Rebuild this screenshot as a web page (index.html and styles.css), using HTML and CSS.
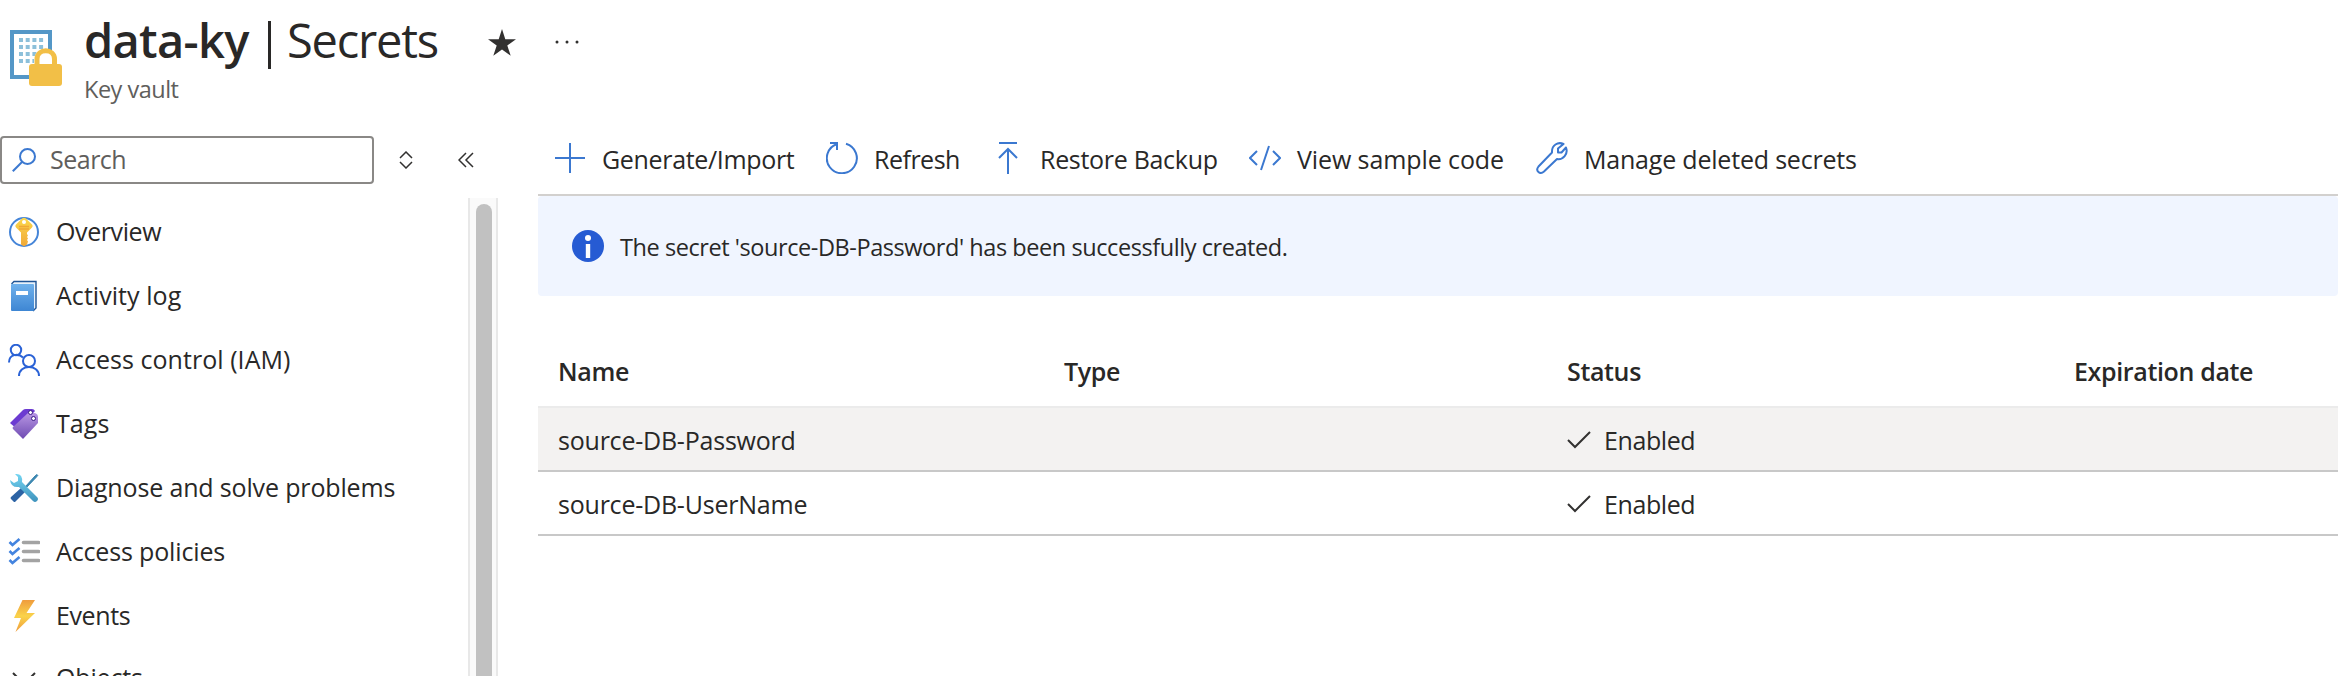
FILE: index.html
```html
<!DOCTYPE html>
<html lang="en">
<head>
<meta charset="utf-8">
<title>data-ky | Secrets</title>
<link rel="stylesheet" href="styles.css">
</head>
<body>
<header class="header">
  <svg class="vault" viewBox="0 0 52 56" width="52" height="56">
    <rect x="2" y="2" width="38" height="45" fill="#fff" stroke="#5497c7" stroke-width="4"/>
    <g stroke="#8dc0da" stroke-width="4" stroke-dasharray="4 2.7">
      <path d="M9 10h25M9 17h25M9 24h25M9 31h25"/>
    </g>
    <path d="M24 40V30C24 16 47 16 47 30V40Z" fill="#fff"/>
    <path d="M27 38V29C27 18 44.500 18 44.500 29V38" fill="none" stroke="#f2bf47" stroke-width="5"/>
    <rect x="19" y="34" width="33" height="22" rx="3" fill="#f2bf47"/>
  </svg>
  <div class="titles">
    <div class="title-row">
      <h1 class="title"><span class="name">data-ky</span><span class="bar"></span><span class="section">Secrets</span></h1>
      <svg class="star" viewBox="0 0 28 27" width="28" height="27"><path d="M14 0l3.300 10.200H28l-8.700 6.300 3.400 10.300L14 20.500l-8.700 6.300 3.400-10.300L0 10.200h10.700z" fill="#323130"/></svg>
      <svg class="more" viewBox="0 0 24 4" width="24" height="4" fill="#323130"><circle cx="2" cy="2" r="1.500"/><circle cx="12" cy="2" r="1.500"/><circle cx="22" cy="2" r="1.500"/></svg>
    </div>
    <div class="subtitle">Key vault</div>
  </div>
</header>
<div class="body">
  <nav class="side">
    <div class="search-row">
      <div class="search">
        <svg viewBox="0 0 24 24" width="24" height="24" fill="none" stroke="#3b78d0" stroke-width="2"><circle cx="15.500" cy="8.500" r="7.500"/><path d="M10 14L.8 23.200"/></svg>
        <span>Search</span>
      </div>
      <svg class="sort" viewBox="0 0 14 18" width="14" height="18" fill="none" stroke="#323130" stroke-width="1.500"><path d="M1 7l6-6 6 6M1 11l6 6 6-6"/></svg>
      <svg class="collapse" viewBox="0 0 16 16" width="16" height="16" fill="none" stroke="#323130" stroke-width="1.500"><path d="M8 1L1 8l7 7M15 1L8 8l7 7"/></svg>
    </div>
    <div class="menu-wrap">
      <ul class="menu">
        <li class="tight"><svg viewBox="0 0 32 32" width="32" height="32"><defs><linearGradient id="key" x2="0" y2="1"><stop stop-color="#fbd84b"/><stop offset="1" stop-color="#f0a838"/></linearGradient></defs><circle cx="16" cy="16" r="14" fill="#fff" stroke="#4585d8" stroke-width="2"/><path d="M14 2.500q2-1.500 4 0l6 6q1.500 1.500 0 3l-5 5V18l1 1.500-1 1.500 1 1.500-1 1.500 1 1.500-1 3-3 2-3-2V16.500l-5-5q-1.500-1.500 0-3z" fill="url(#key)"/><circle cx="16" cy="6" r="2" fill="#fff"/><path d="M11 10.500h10M11 13h10" stroke="#f0a838" stroke-width="1.300"/></svg><span>Overview</span></li>
        <li class="wide"><svg viewBox="0 0 32 32" width="32" height="32"><defs><linearGradient id="book" x2="0" y2="1"><stop stop-color="#6fb1ec"/><stop offset="1" stop-color="#3e86d3"/></linearGradient></defs><path d="M3.500 4L6 1.500h22V28l-3 3" fill="#e8f2fb" stroke="#1f5596" stroke-width="1.400"/><rect x="3" y="4" width="23" height="27" rx="1" fill="url(#book)"/><path d="M8 11h12v4H8z" fill="#fff"/></svg><span>Activity log</span></li>
        <li class="wide"><svg viewBox="0 0 32 32" width="32" height="32" fill="none" stroke="#2a62d6" stroke-width="2"><circle cx="8" cy="6" r="5.200"/><path d="M1 18.500C1 9.500 11 9.500 15 13.500"/><circle cx="21" cy="17" r="6"/><path d="M11 32C11 20 31 20 31 32"/></svg><span>Access control (IAM)</span></li>
        <li class="wide"><svg viewBox="0 0 32 32" width="32" height="32"><defs><linearGradient id="tag" x2="0" y2="1"><stop stop-color="#b796e3"/><stop offset="1" stop-color="#6f4bb2"/></linearGradient></defs><path d="M2 15L15 2q1-1 3-1h6q2 0 3 2L10 22z" fill="#6c3bd1"/><path d="M5 19L20 5h7q3 1 3 4v6L15 31 5 21q-1-1 0-2z" fill="url(#tag)"/><circle cx="22.500" cy="4.500" r="2" fill="#fff" stroke="#3b1a86"/><circle cx="25.500" cy="10.500" r="2" fill="#fff" stroke="#3b1a86"/></svg><span>Tags</span></li>
        <li><svg viewBox="0 0 32 32" width="32" height="32"><defs><linearGradient id="wr" x2="0" y2="1"><stop stop-color="#74d5f2"/><stop offset="1" stop-color="#3f93bd"/></linearGradient></defs><path d="M17 15L27 4l2-1.500.8.8L28.500 5 18 16z" fill="#3a86b0" stroke="#3a86b0"/><path d="M13 16L3 25q-1 1 0 2l2.500 2.500q1 1 2 0L17 20z" fill="#2c63a4"/><path d="M7 2q8-1 7 8l15 15q2 2 0 4t-4 0L11 15Q3 16 2 8l4 3 4-2V5z" fill="url(#wr)"/></svg><span>Diagnose and solve problems</span></li>
        <li><svg viewBox="0 0 32 32" width="32" height="32" fill="none"><path d="M15.500 6.500h15M15.500 15.500h15M15.500 24.500h15" stroke="#a3a3a3" stroke-width="3.600" stroke-linecap="round"/><path d="M1.500 6l3 3 7-6M1.500 15l3 3 7-6M1.500 24l3 3 7-6" stroke="#4484df" stroke-width="2.600"/></svg><span>Access policies</span></li>
        <li class="tight"><svg viewBox="0 0 32 32" width="32" height="32"><defs><linearGradient id="bolt" x2="0" y2="1"><stop stop-color="#ef9c3d"/><stop offset=".5" stop-color="#fad34a"/><stop offset="1" stop-color="#ef9c3d"/></linearGradient></defs><path d="M14.500 0H27l-8.500 13H27L7.500 32l5.500-14H6z" fill="url(#bolt)"/></svg><span>Events</span></li>
        <li class="group"><svg viewBox="0 0 32 32" width="32" height="32" fill="none" stroke="#323130" stroke-width="2"><path d="M5 11l11 11 11-11"/></svg><span>Objects</span></li>
      </ul>
      <div class="track"><div class="thumb"></div></div>
    </div>
  </nav>
  <main class="main">
    <div class="toolbar">
      <svg viewBox="0 0 32 32" width="32" height="32" fill="none" stroke="#3b78d0" stroke-width="2"><path d="M1 16h30M16 1v30"/></svg><span class="b1">Generate/Import</span>
      <svg viewBox="0 0 32 32" width="32" height="32" fill="none" stroke="#3b78d0" stroke-width="2"><path d="M20 1.800A15 15 0 1 1 11 2M4 1h7v7"/></svg><span class="b2">Refresh</span>
      <svg viewBox="0 0 32 32" width="32" height="32" fill="none" stroke="#3b78d0" stroke-width="2"><path d="M7 1h18M16 32V7M7 16l9-9 9 9"/></svg><span class="b3">Restore Backup</span>
      <svg viewBox="0 0 32 32" width="32" height="32" fill="none" stroke="#3b78d0" stroke-width="2"><path d="M8 9l-7 7 7 7M24 9l7 7-7 7M20 4l-8 24"/></svg><span class="b4">View sample code</span>
      <svg viewBox="0 0 32 32" width="32" height="32" fill="none" stroke="#3b78d0" stroke-width="2" stroke-linejoin="round"><path d="M27.500 2C22-.5 15.500 3 16 10.500L2.500 24.500C-1 29 4 33 8 29.500L21 17C27 18 32.500 12 30 5.500L25.500 10.500H22V6.500Z"/></svg><span class="b5">Manage deleted secrets</span>
    </div>
    <div class="banner">
      <svg viewBox="0 0 32 32" width="32" height="32"><circle cx="16" cy="16" r="16" fill="#265bd3"/><circle cx="16" cy="8" r="3" fill="#fff"/><path d="M13.800 14h4.400v14h-4.400z" fill="#fff"/></svg>
      <span>The secret 'source-DB-Password' has been successfully created.</span>
    </div>
    <div class="table">
      <div class="row head"><span>Name</span><span>Type</span><span>Status</span><span>Expiration date</span></div>
      <div class="row selected"><span>source-DB-Password</span><span></span><span class="status"><svg viewBox="0 0 24 18" width="24" height="18" fill="none" stroke="#323130" stroke-width="2"><path d="M1 9l7 7L23 1"/></svg>Enabled</span><span></span></div>
      <div class="row"><span>source-DB-UserName</span><span></span><span class="status"><svg viewBox="0 0 24 18" width="24" height="18" fill="none" stroke="#323130" stroke-width="2"><path d="M1 9l7 7L23 1"/></svg>Enabled</span><span></span></div>
    </div>
  </main>
</div>
</body>
</html>
```
FILE: styles.css
```css
* { box-sizing: border-box; }
body {
  margin: 0;
  width: 2338px;
  height: 676px;
  overflow: hidden;
  background: #fff;
  color: #292827;
  font: 25px/32px "Open Sans", "Noto Sans", sans-serif;
  white-space: nowrap;
}
svg { display: block; flex: none; }
.header { display: flex; height: 136px; padding-left: 10px; }
.vault { margin-top: 30px; }
.titles { margin-left: 22px; }
.title-row { display: flex; height: 73px; }
.title { display: flex; width: 404px; margin: 0; padding-top: 7px; font-size: 47px; line-height: 66px; font-weight: 400; }
.name { width: 184px; font-weight: 600; letter-spacing: -0.7px; }
.bar { width: 3px; height: 48px; margin: 14px 16px 0 0; background: #292827; }
.section { letter-spacing: -1.2px; }
.star { margin-top: 29px; }
.more { margin: 40px 0 0 39px; }
.subtitle { color: #605e5c; font-size: 23.5px; line-height: 32px; letter-spacing: -0.5px; }
.body { display: flex; height: 540px; overflow: hidden; }
.side { display: flex; flex-direction: column; width: 538px; }
.search-row { display: flex; align-items: center; height: 48px; }
.search { display: flex; align-items: center; gap: 14px; width: 374px; height: 48px; padding-left: 10px; border: 2px solid #8a8886; border-radius: 4px; color: #605e5c; letter-spacing: -0.5px; }
.search span { padding-bottom: 2px; }
.sort { margin-left: 25px; }
.collapse { margin-left: 45px; }
.menu-wrap { display: flex; height: 478px; margin-top: 14px; overflow: hidden; }
.menu { width: 468px; margin: 0; padding: 2px 0 0 8px; list-style: none; letter-spacing: -0.15px; }
.menu li { display: flex; align-items: center; gap: 16px; height: 64px; }
.menu li span { padding-bottom: 2px; }
.menu .tight { letter-spacing: -0.4px; }
.menu .wide { letter-spacing: 0.05px; }
.menu .group { height: 60px; }
.track { width: 30px; height: 478px; padding: 6px 4px 0 6px; border: solid #e8e8e8; border-width: 0 2px; background: #fafafa; overflow: hidden; }
.thumb { width: 16px; height: 490px; border-radius: 8px; background: #c1c1c1; }
.main { width: 1800px; }
.toolbar { display: flex; align-items: center; height: 60px; padding: 0 0 14px 16px; border-bottom: 2px solid #d2d0ce; }
.toolbar span { margin-left: 16px; padding-top: 2px; }
.toolbar .b1 { width: 224px; letter-spacing: -0.33px; }
.toolbar .b2 { width: 118px; letter-spacing: -0.5px; }
.toolbar .b3 { width: 209px; letter-spacing: -0.3px; }
.toolbar .b4 { width: 239px; letter-spacing: -0.1px; }
.toolbar .b5 { letter-spacing: -0.2px; }
.banner { display: flex; align-items: center; gap: 16px; height: 100px; padding-left: 34px; border-radius: 4px; background: #f0f5ff; font-size: 23.5px; letter-spacing: -0.43px; }
.banner span { padding-top: 1px; }
.table { padding-top: 46px; }
.row { display: grid; grid-template-columns: 506px 503px 507px 1fr; align-items: center; height: 64px; padding: 2px 0 0 20px; border-bottom: 2px solid #c8c8c8; letter-spacing: -0.22px; }
.head { height: 66px; padding: 0 0 6px 20px; border-color: #ebebeb; font-weight: 600; letter-spacing: -0.35px; }
.selected { background: #f3f2f1; }
.status { display: flex; align-items: center; gap: 13px; letter-spacing: -0.4px; }
```
